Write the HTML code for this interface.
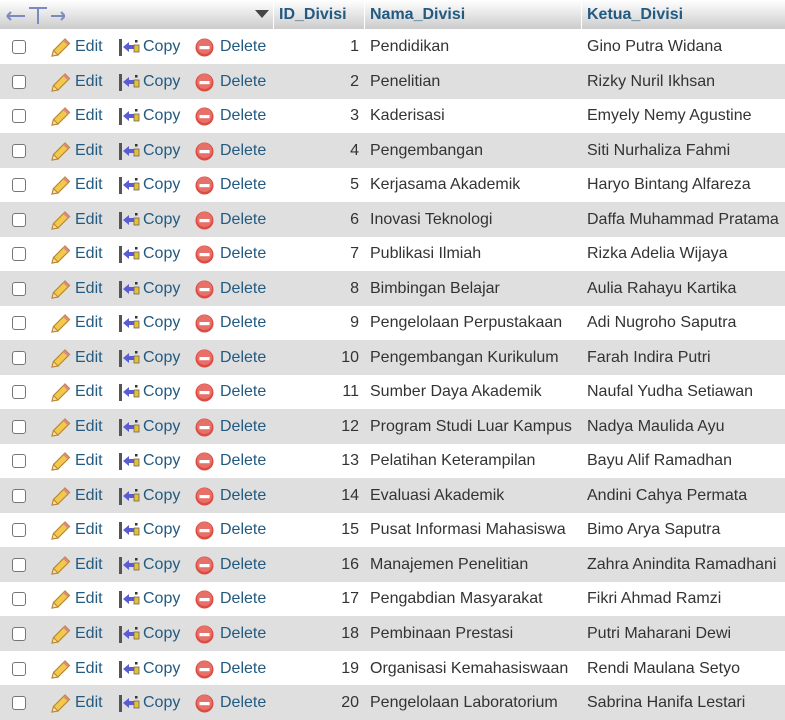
<!DOCTYPE html>
<html><head><style>
body{margin:0;width:785px;height:715px;overflow:hidden;font-family:"Liberation Sans",Arial,sans-serif;font-size:16px;color:#333;background:#fff;position:relative}
.h{position:absolute;left:0;top:0;width:785px;height:29px;background:linear-gradient(#fff,#ccc);}
.h div{position:absolute;top:0;height:29px;line-height:29px;font-weight:bold;color:#235a81}
.sep{position:absolute;top:0;width:1px;height:29px;background:#fff}
.r{position:absolute;left:0;width:785px;height:35px;}
.r.e{background:#dfdfdf}
.r>*{position:absolute;top:0;line-height:35px;white-space:nowrap}
.cb{top:11px!important;left:12px;width:14px;height:14px;border:1px solid #767676;border-radius:3px;background:#fff;box-sizing:border-box}
.a{color:#235a81}
.ic{top:8px!important}
</style></head><body>
<div class="h">
<svg style="position:absolute;left:5px;top:4px" width="60" height="22" viewBox="0 0 60 22"><g stroke="#7d8ac0" stroke-width="2" fill="none"><path d="M2 12 H20 M2 12 L6 8 M2 12 L6 16"/><path d="M24 4 H42 M33 4 V20"/><path d="M46 12 H60 M60 12 L56 8 M60 12 L56 16"/></g></svg>
<svg style="position:absolute;left:255px;top:10px" width="14" height="9" viewBox="0 0 14 9"><path d="M0 0 H14 L7 8 Z" fill="#444"/></svg>
<div class="sep" style="left:273px"></div>
<div style="left:279px">ID_Divisi</div>
<div class="sep" style="left:364px"></div>
<div style="left:370px">Nama_Divisi</div>
<div class="sep" style="left:581px"></div>
<div style="left:587px">Ketua_Divisi</div>
</div>
<div id="rows"></div>
<script>
var d=[["Pendidikan","Gino Putra Widana"],["Penelitian","Rizky Nuril Ikhsan"],["Kaderisasi","Emyely Nemy Agustine"],["Pengembangan","Siti Nurhaliza Fahmi"],["Kerjasama Akademik","Haryo Bintang Alfareza"],["Inovasi Teknologi","Daffa Muhammad Pratama"],["Publikasi Ilmiah","Rizka Adelia Wijaya"],["Bimbingan Belajar","Aulia Rahayu Kartika"],["Pengelolaan Perpustakaan","Adi Nugroho Saputra"],["Pengembangan Kurikulum","Farah Indira Putri"],["Sumber Daya Akademik","Naufal Yudha Setiawan"],["Program Studi Luar Kampus","Nadya Maulida Ayu"],["Pelatihan Keterampilan","Bayu Alif Ramadhan"],["Evaluasi Akademik","Andini Cahya Permata"],["Pusat Informasi Mahasiswa","Bimo Arya Saputra"],["Manajemen Penelitian","Zahra Anindita Ramadhani"],["Pengabdian Masyarakat","Fikri Ahmad Ramzi"],["Pembinaan Prestasi","Putri Maharani Dewi"],["Organisasi Kemahasiswaan","Rendi Maulana Setyo"],["Pengelolaan Laboratorium","Sabrina Hanifa Lestari"]];
var pen='<svg class="ic" style="left:50px" width="21" height="21" viewBox="0 0 21 21"><path d="M2 19 L3.5 13.5 L15 2 L19.5 6.5 L8 18 Z" fill="#f2c94c" stroke="#b8862b" stroke-width="1.2"/><path d="M2 19 L3.5 13.5 L8 18 Z" fill="#f5deb3" stroke="#b8862b" stroke-width="1"/><path d="M14 3 L18.5 7.5" stroke="#d88" stroke-width="2.5"/></svg>';
var cp='<svg class="ic" style="left:118px" width="22" height="21" viewBox="0 0 22 21"><rect x="1" y="2" width="3" height="17" fill="#555"/><path d="M5 10 L11 5 L11 8 L16 8 L16 12 L11 12 L11 15 Z" fill="#5b5bd6"/><rect x="16" y="8" width="5" height="7" fill="#e8c02e" stroke="#666" stroke-width=".8"/><rect x="17" y="3" width="2.5" height="2.5" fill="#333"/></svg>';
var del='<svg class="ic" style="left:195px;top:9px!important" width="19" height="19" viewBox="0 0 19 19"><circle cx="9.5" cy="9.5" r="9" fill="#dd4c44"/><circle cx="9.5" cy="8.5" r="7.5" fill="#ee8a80" opacity=".6"/><rect x="4.5" y="8" width="10" height="3.2" fill="#fff"/></svg>';
var h='';
for(var i=0;i<20;i++){var t=(29+i*34.53).toFixed(2);
h+='<div class="r'+(i%2?' e':'')+'" style="top:'+t+'px"><div class="cb"></div>'+pen+'<span class="a" style="left:75px">Edit</span>'+cp+'<span class="a" style="left:143px">Copy</span>'+del+'<span class="a" style="left:220px">Delete</span><span style="right:426px">'+(i+1)+'</span><span style="left:370px">'+d[i][0]+'</span><span style="left:587px">'+d[i][1]+'</span></div>';}
document.getElementById('rows').innerHTML=h;
</script>
</body></html>
